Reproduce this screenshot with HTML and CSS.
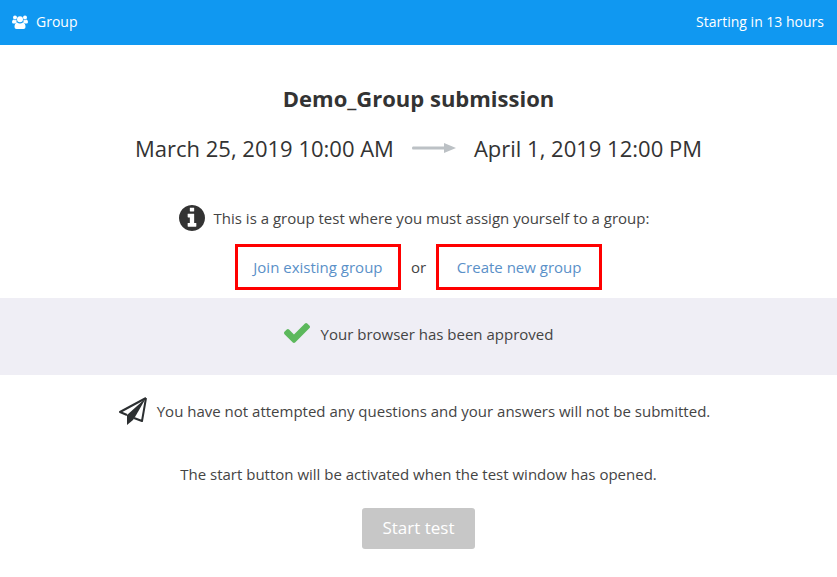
FILE: index.html
```
<!DOCTYPE html>
<html lang="en">
<head>
    <meta charset="UTF-8">
    <meta name="viewport" content="width=device-width, initial-scale=1.0">
    <title>Demo_Group submission</title>
    <link rel="stylesheet" href="styles.css">
</head>
<body>

<header class="topbar">
    <div class="topbar-group">
        <svg class="icon-group" viewBox="0 0 32 28" aria-hidden="true">
            <circle cx="6" cy="5" r="4"/>
            <circle cx="26" cy="5" r="4"/>
            <path d="M3 9Q6 12 9 9Q8 14 11 15Q8 15 6 17H3Q0 17 0 14Q0 10 3 9z"/>
            <path d="M29 9Q26 12 23 9Q24 14 21 15Q24 15 26 17H29Q32 17 32 14Q32 10 29 9z"/>
            <circle cx="16" cy="8.500" r="6"/>
            <path d="M10 15Q16 19 22 15Q27 16 27 24Q27 28 23 28H9Q5 28 5 24Q5 16 10 15z"/>
        </svg>
        <span>Group</span>
    </div>
    <span>Starting in 13 hours</span>
</header>

<main>
    <section class="intro">
        <h1>Demo_Group submission</h1>
        <div class="dates">
            <span>March 25, 2019 10:00 AM</span>
            <svg class="icon-arrow" viewBox="0 0 44 12" aria-hidden="true">
                <path d="M1 4.500H32V1L44 6L32 11V7.500H1Q0 7.500 0 6T1 4.500z"/>
            </svg>
            <span>April 1, 2019 12:00 PM</span>
        </div>
        <p class="message">
            <svg class="icon-info" viewBox="128 128 1536 1536" aria-hidden="true">
                <path d="M1152 1376v-160q0-14-9-23t-23-9h-96v-512q0-14-9-23t-23-9h-320q-14 0-23 9t-9 23v160q0 14 9 23t23 9h96v320h-96q-14 0-23 9t-9 23v160q0 14 9 23t23 9h448q14 0 23-9t9-23zm-128-896v-160q0-14-9-23t-23-9h-192q-14 0-23 9t-9 23v160q0 14 9 23t23 9h192q14 0 23-9t9-23zm640 416q0 209-103 385.5t-279.5 279.5-385.5 103-385.5-103-279.5-279.5-103-385.5 103-385.5 279.5-279.5 385.5-103 385.5 103 279.5 279.5 103 385.5z"/>
            </svg>
            This is a group test where you must assign yourself to a group:
        </p>
        <div class="choices">
            <a class="choice" href="#join">Join existing group</a>
            <span>or</span>
            <a class="choice" href="#create">Create new group</a>
        </div>
    </section>

    <section class="browser-check">
        <svg class="icon-check" viewBox="121 334 1550 1188" aria-hidden="true">
            <path d="M1671 566q0 40-28 68l-724 724-136 136q-28 28-68 28t-68-28l-136-136-362-362q-28-28-28-68t28-68l136-136q28-28 68-28t68 28l294 295 656-657q28-28 68-28t68 28l136 136q28 28 28 68z"/>
        </svg>
        <span>Your browser has been approved</span>
    </section>

    <section class="start">
        <p class="message">
            <svg class="icon-plane" viewBox="0 0 30 30" aria-hidden="true">
                <path class="outline" d="M28 2L2 16L9 19M28 2L24 25L16 22"/>
                <path d="M28 2L9 19V29L15 24L17 21z"/>
            </svg>
            You have not attempted any questions and your answers will not be submitted.
        </p>
        <p class="hint">The start button will be activated when the test window has opened.</p>
        <button class="start-button" type="button" disabled>Start test</button>
    </section>
</main>

</body>
</html>
```
FILE: styles.css
```
body {
    margin: 0;
    font-family: "Open Sans", sans-serif;
    font-size: 15px;
    line-height: 20px;
    color: #444;
    background-color: #fff;
}
h1, p {
    margin: 0;
}
svg {
    flex: none;
    fill: currentColor;
}

.topbar {
    display: flex;
    justify-content: space-between;
    padding: 12px 13px 13px 12px;
    font-size: 14px;
    color: #fff;
    background-color: #1098f1;
}
.topbar-group {
    display: flex;
    align-items: center;
    gap: 8px;
}
.icon-group {
    width: 16px;
    height: 14px;
}

.intro {
    display: flex;
    flex-direction: column;
    align-items: center;
    padding: 37px 12px 8px;
}
h1 {
    font-size: 22px;
    line-height: 32px;
    color: #333;
}
.dates {
    display: flex;
    align-items: center;
    gap: 18px;
    margin-top: 18px;
    font-size: 22px;
    line-height: 32px;
    color: #333;
}
.icon-arrow {
    width: 44px;
    height: 12px;
    color: #bcc1c5;
}
.message {
    display: flex;
    align-items: center;
    justify-content: center;
    gap: 9px;
    padding-right: 9px;
}
.intro .message {
    margin-top: 41px;
}
.icon-info {
    width: 26px;
    height: 26px;
    color: #333;
}
.choices {
    display: flex;
    align-items: center;
    gap: 10px;
    margin-top: 13px;
}
.choice {
    box-sizing: border-box;
    min-width: 166px;
    padding: 10px 12px;
    border: 3px solid #f00;
    text-align: center;
    text-decoration: none;
    color: #5a90c8;
}

.browser-check {
    display: flex;
    justify-content: center;
    gap: 11px;
    padding: 25px 12px 30px;
    line-height: 22px;
    background-color: #efeef5;
}
.icon-check {
    width: 26px;
    height: 20px;
    color: #5cb85c;
}

.start {
    display: flex;
    flex-direction: column;
    align-items: center;
    padding: 21px 12px 28px;
}
.icon-plane {
    width: 30px;
    height: 30px;
    color: #2c2f31;
}
.icon-plane .outline {
    fill: none;
    stroke: currentColor;
    stroke-width: 2;
    stroke-linejoin: round;
}
.hint {
    margin-top: 38px;
}
.start-button {
    margin-top: 24px;
    padding: 8px 20px 9px;
    border: 0;
    border-radius: 3px;
    font-family: inherit;
    font-size: 17px;
    line-height: 24px;
    color: #fff;
    background-color: #c7c7c7;
}
```
